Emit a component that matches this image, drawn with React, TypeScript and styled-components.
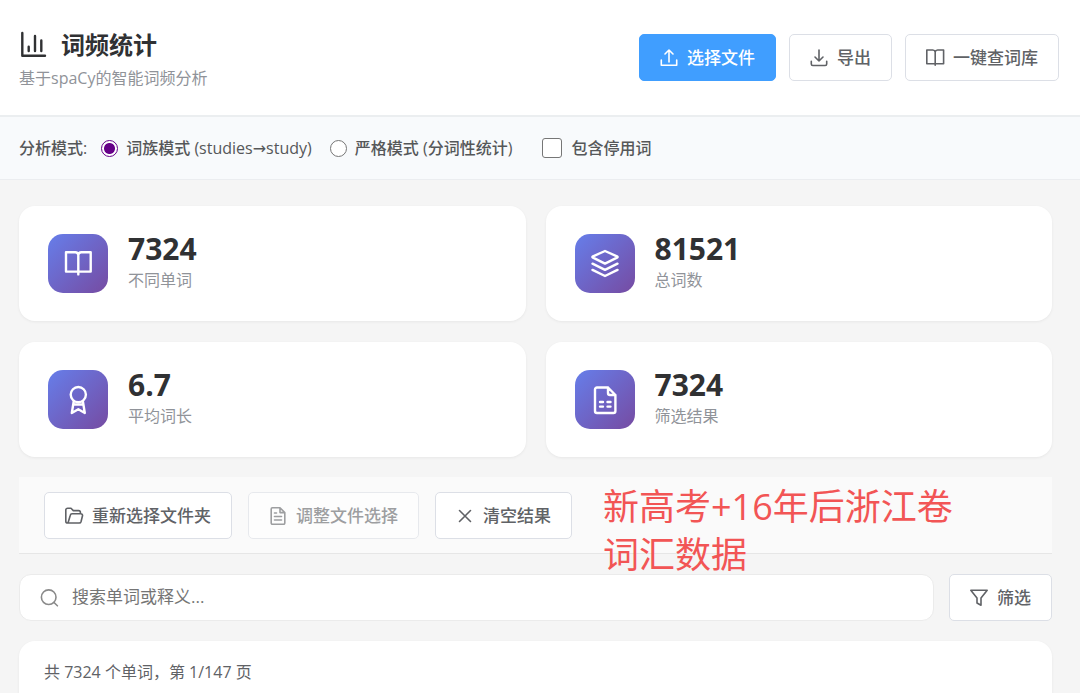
import React from "react";
import styled, { createGlobalStyle } from "styled-components";

const GlobalStyle = createGlobalStyle`
  *, *::before, *::after { box-sizing: border-box; }
  body {
    margin: 0;
    background: #f5f5f5;
    color: #303133;
    font-family: "Open Sans", "Noto Sans CJK SC", sans-serif;
    font-size: 16px;
    line-height: 24px;
  }
  button, input { font: inherit; }
`;

const Header = styled.header`
  display: flex;
  align-items: center;
  justify-content: space-between;
  padding: 24px 21px 24px 19px;
  min-height: 117px;
  background: #fff;
  border-bottom: 2px solid #ebeef0;
`;

const Brand = styled.div`
  padding-top: 4px;
`;

const Title = styled.h1`
  display: flex;
  align-items: center;
  gap: 14px;
  margin: 0;
  font-size: 24px;
  line-height: 32px;
  font-weight: 700;
  color: #303133;
`;

const Subtitle = styled.p`
  margin: 5px 0 0;
  color: #909399;
`;

const Actions = styled.div`
  display: flex;
  gap: 13px;
`;

const Button = styled.button<{ $primary?: boolean }>`
  display: inline-flex;
  align-items: center;
  justify-content: center;
  gap: 9px;
  flex-shrink: 0;
  height: 47px;
  padding: 0 20px;
  border: 1px solid ${(p) => (p.$primary ? "#409eff" : "#dcdfe6")};
  border-radius: 5px;
  background: ${(p) => (p.$primary ? "#409eff" : "#fff")};
  color: ${(p) => (p.$primary ? "#fff" : "#606266")};
  font-size: 17px;
  font-weight: 500;
  white-space: nowrap;
  cursor: pointer;

  &:disabled {
    opacity: 0.6;
    cursor: not-allowed;
  }
`;

const ModeBar = styled.fieldset`
  display: flex;
  align-items: center;
  margin: 0;
  min-width: 0;
  height: 63px;
  padding: 0 19px;
  border: 0;
  border-bottom: 1px solid #ebedf0;
  background: #f8fafc;
  color: #555759;
  font-weight: 500;
`;

const ModeName = styled.span`
  margin-right: 14px;
`;

const Option = styled.label<{ $after?: number }>`
  display: flex;
  align-items: center;
  gap: 8px;
  margin-right: ${(p) => p.$after ?? 0}px;
  white-space: nowrap;
  cursor: pointer;
`;

const Arrow = styled.span`
  font-family: "DejaVu Sans", sans-serif;
  font-weight: 400;
`;

const Radio = styled.input`
  appearance: none;
  width: 17px;
  height: 17px;
  margin: 0;
  border: 1px solid #767676;
  border-radius: 50%;
  background: #fff;

  &:checked {
    border-color: #660088;
    background: radial-gradient(circle, #660088 0 5px, #fff 6px);
  }
`;

const Checkbox = styled.input`
  appearance: none;
  width: 20px;
  height: 20px;
  margin: 0 1px 0 0;
  border: 1px solid #767676;
  border-radius: 3px;
  background: #fff;

  &:checked {
    background: #660088;
  }
`;

const Content = styled.main`
  display: flex;
  flex-direction: column;
  gap: 20px;
  padding: 26px 28px 0 19px;
`;

const Stats = styled.section`
  display: grid;
  grid-template-columns: 1fr 1fr;
  gap: 21px 20px;
`;

const StatCard = styled.article`
  display: flex;
  gap: 20px;
  padding: 28px 29px;
  border-radius: 16px;
  background: #fff;
  box-shadow: 0 1px 3px rgba(0, 0, 0, 0.06);
`;

const StatIcon = styled.div`
  display: grid;
  place-items: center;
  width: 60px;
  height: 59px;
  border-radius: 15px;
  background: linear-gradient(135deg, #667eea, #764ba2);
  color: #fff;
`;

const StatText = styled.div`
  display: flex;
  flex-direction: column;
  gap: 5px;
`;

const StatValue = styled.div`
  font-size: 30px;
  line-height: 30px;
  font-weight: 700;
`;

const StatLabel = styled.div`
  line-height: 22px;
  color: #909399;
`;

const Toolbar = styled.section`
  position: relative;
  display: flex;
  gap: 16px;
  padding: 15px 25px 14px;
  border-bottom: 1px solid #e6e6e6;
  background: #fafafa;
`;

const Note = styled.p`
  position: absolute;
  top: 6px;
  left: 584px;
  margin: 0;
  color: #f25555;
  font-size: 36px;
  line-height: 48px;
  white-space: nowrap;
`;

const SearchRow = styled.form`
  display: flex;
  gap: 15px;
`;

const SearchBox = styled.label`
  display: flex;
  flex: 1;
  align-items: center;
  gap: 12px;
  min-width: 0;
  padding: 0 20px;
  border: 1px solid #ebebeb;
  border-radius: 12px;
  background: #fff;
  color: #8a8a8a;
`;

const SearchInput = styled.input`
  flex: 1;
  min-width: 0;
  padding: 0 0 2px;
  border: 0;
  outline: 0;
  background: transparent;
  color: #303133;
  font-size: 17px;

  &::placeholder {
    color: #757575;
    opacity: 1;
  }
`;

const Results = styled.section`
  min-height: 64px;
  padding: 19px 25px;
  border-radius: 16px 16px 0 0;
  background: #fff;
  box-shadow: 0 1px 3px rgba(0, 0, 0, 0.06);
  color: #606266;
`;

type IconProps = { size?: number; stroke?: number; children: React.ReactNode };

const Icon = ({ size = 18, stroke = 1.6, children }: IconProps) => (
  <svg
    width={size}
    height={size}
    viewBox={`0 0 ${size} ${size}`}
    fill="none"
    stroke="currentColor"
    strokeWidth={stroke}
    strokeLinecap="round"
    strokeLinejoin="round"
    overflow="visible"
    aria-hidden="true"
  >
    {children}
  </svg>
);

const stats = [
  {
    value: "7324",
    label: "不同单词",
    icon: (
      <path d="M14.3 4.8A3 3 0 0 0 11.3 2.2H2V21.6H14.3M14.3 4.8A3 3 0 0 1 17.3 2.2H26.7V21.6H14.3M14.3 4.8V24.4" />
    ),
  },
  {
    value: "81521",
    label: "总词数",
    icon: (
      <path d="M14 1 26 6.3Q27.3 7 26 7.7L14 13.6 2 7.7Q.7 7 2 6.3ZM1.5 13.7 14 19.8 26.5 13.7M1.5 19.9 14 26 26.5 19.9" />
    ),
  },
  {
    value: "6.7",
    label: "平均词长",
    icon: (
      <>
        <circle cx="14.3" cy="8.6" r="7.6" />
        <path d="M9.7 15.5 7.8 27 14.3 23.3 20.8 27 18.9 15.5M10 18.5H18.6" />
      </>
    ),
  },
  {
    value: "7324",
    label: "筛选结果",
    icon: (
      <path d="M17 1.5H6A2 2 0 0 0 4 3.5V25A2 2 0 0 0 6 27H22.4A2 2 0 0 0 24.4 25V9ZM17 1.5V7A2 2 0 0 0 19 9H24.4M9 16H12M16.5 16H19.5M9 20.6H12M16.5 20.6H19.5" />
    ),
  },
];

export default function App() {
  return (
    <>
      <GlobalStyle />
      <Header>
        <Brand>
          <Title>
            <Icon size={28} stroke={2.4}>
              <path d="M3.3 2V24.7H26M9.7 15.8V20M16 5V20M22.3 9.5V20" />
            </Icon>
            词频统计
          </Title>
          <Subtitle>基于spaCy的智能词频分析</Subtitle>
        </Brand>
        <Actions>
          <Button type="button" $primary>
            <Icon>
              <path d="M9 13V1M5 5 9 1 13 5M1.3 11V16.3H16.7V11" />
            </Icon>
            选择文件
          </Button>
          <Button type="button">
            <Icon>
              <path d="M9 1V12M5 8 9 12 13 8M1.3 12.2V15A1.5 1.5 0 0 0 2.8 16.5H15.2A1.5 1.5 0 0 0 16.7 15V12.2" />
            </Icon>
            导出
          </Button>
          <Button type="button">
            <Icon>
              <path d="M9.2 3A2.5 2.5 0 0 0 6.7 1H.8V14.8H9.2M9.2 3A2.5 2.5 0 0 1 11.7 1H17.6V14.8H9.2M9.2 3V16.3" />
            </Icon>
            一键查词库
          </Button>
        </Actions>
      </Header>

      <ModeBar>
        <ModeName>分析模式:</ModeName>
        <Option $after={18}>
          <Radio type="radio" name="mode" defaultChecked />
          <span>
            词族模式 (studies<Arrow>→</Arrow>study)
          </span>
        </Option>
        <Option $after={30}>
          <Radio type="radio" name="mode" />
          严格模式 (分词性统计)
        </Option>
        <Option>
          <Checkbox type="checkbox" />
          包含停用词
        </Option>
      </ModeBar>

      <Content>
        <Stats>
          {stats.map((s) => (
            <StatCard key={s.label}>
              <StatIcon>
                <Icon size={28} stroke={2.4}>
                  {s.icon}
                </Icon>
              </StatIcon>
              <StatText>
                <StatValue>{s.value}</StatValue>
                <StatLabel>{s.label}</StatLabel>
              </StatText>
            </StatCard>
          ))}
        </Stats>

        <Toolbar>
          <Button type="button">
            <Icon>
              <path d="M3.4 16H2.6A1.8 1.8 0 0 1 .8 14.2V3A1.8 1.8 0 0 1 2.6 1.2H6L8.3 3.6H13.6A1.8 1.8 0 0 1 15.4 5.4V6.8M3 16 5.3 8.2A1.8 1.8 0 0 1 7 6.8H16A1.6 1.6 0 0 1 17.5 8.8L16 14.7A1.8 1.8 0 0 1 14.2 16Z" />
            </Icon>
            重新选择文件夹
          </Button>
          <Button type="button" disabled>
            <Icon>
              <path d="M11 .8H3.4A1.2 1.2 0 0 0 2.2 2V16A1.2 1.2 0 0 0 3.4 17.2H14.6A1.2 1.2 0 0 0 15.8 16V5.6ZM11 .8V5.6H15.8M5.5 6H7.5M5.5 9.5H12.5M5.5 13H12.5" />
            </Icon>
            调整文件选择
          </Button>
          <Button type="button">
            <Icon>
              <path d="M3.5 3.5 14.5 14.5M14.5 3.5 3.5 14.5" />
            </Icon>
            清空结果
          </Button>
          <Note>
            新高考+16年后浙江卷
            <br />
            词汇数据
          </Note>
        </Toolbar>

        <SearchRow onSubmit={(e) => e.preventDefault()}>
          <SearchBox>
            <Icon size={20}>
              <circle cx="8.7" cy="9.2" r="7.3" />
              <path d="M14 14.5 17.4 17.8" />
            </Icon>
            <SearchInput type="text" placeholder="搜索单词或释义..." aria-label="搜索单词或释义" />
          </SearchBox>
          <Button type="button">
            <Icon>
              <path d="M.8 1.3H17.2L11 9V16.3L7 14V9Z" />
            </Icon>
            筛选
          </Button>
        </SearchRow>

        <Results>共 7324 个单词，第 1/147 页</Results>
      </Content>
    </>
  );
}
